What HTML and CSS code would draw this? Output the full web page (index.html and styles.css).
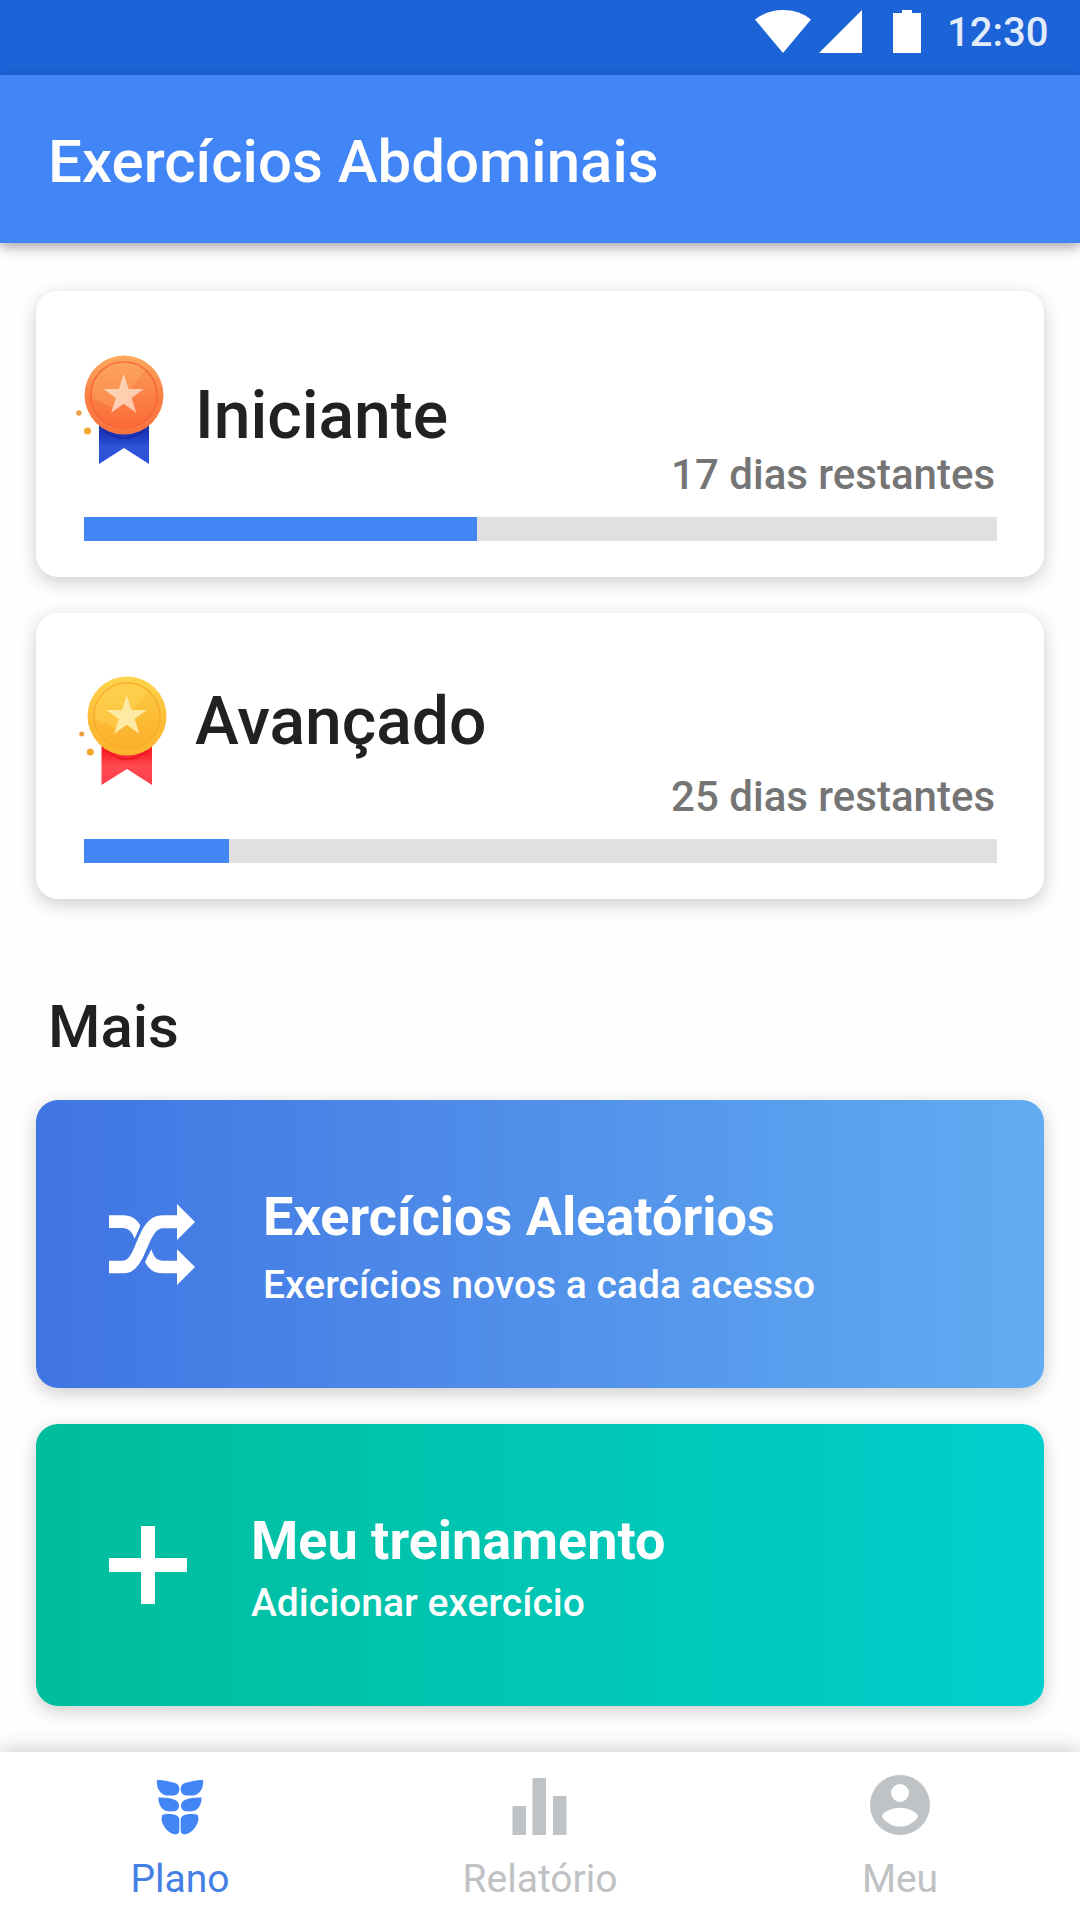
FILE: index.html
```html
<!DOCTYPE html>
<html lang="pt-BR">
<head>
<meta charset="utf-8">
<title>Exercícios Abdominais</title>
<link rel="stylesheet" href="styles.css">
</head>
<body>
<div class="screen">
  <div class="status-bar">
    <svg class="status-icons" viewBox="0 0 168 44" aria-hidden="true">
      <path d="M0 9.500C8 3 18 0 28 0s20 3 28 9.500L28 43z"/>
      <path d="M64 43h43V0z"/>
      <path d="M138 3h9V0h10v3h9v40h-28z"/>
    </svg>
    <span class="clock">12:30</span>
  </div>
  <header class="app-bar"><h1>Exercícios Abdominais</h1></header>

  <main class="content">
    <section class="card plan beginner">
      <div class="plan-head">
        <svg class="medal" viewBox="0 0 96 120" aria-hidden="true">
          <defs>
            <linearGradient id="bronze-rim" x1="0" y1="0" x2="0" y2="1"><stop offset="0" stop-color="#fcaa5c"/><stop offset=".55" stop-color="#fa7c45"/><stop offset="1" stop-color="#f9743f"/></linearGradient>
            <linearGradient id="bronze" x1="0" y1="0" x2="0" y2="1"><stop offset="0" stop-color="#fa9a55"/><stop offset="1" stop-color="#fb6a38"/></linearGradient>
            <linearGradient id="blue-ribbon" x1="0" y1="0" x2="0" y2="1"><stop offset=".35" stop-color="#1a35b8"/><stop offset=".65" stop-color="#2f55d8"/><stop offset="1" stop-color="#2c50d4"/></linearGradient>
            <linearGradient id="bronze-star" x1="0" y1="0" x2="1" y2="1"><stop offset="0" stop-color="#ffd9bd"/><stop offset="1" stop-color="#fec4a6"/></linearGradient>
          </defs>
          <path fill="url(#blue-ribbon)" d="M23 66h50v47L48 97l-25 16z"/>
          <path fill="#1420a0" opacity=".55" d="M27 77q21 18 42 0v2q-21 19-42 0z"/>
          <circle cx="48" cy="44" r="39.500" fill="url(#bronze-rim)"/>
          <circle cx="48" cy="44" r="33" fill="url(#bronze)" stroke="#f8673a" stroke-width="1.600"/>
          <path fill="#ffbf70" opacity=".28" d="M69 19A32.200 32.200 0 0 0 16 47L40 58z"/>
          <path fill="url(#bronze-star)" d="M47.700 23l4.800 15h15.200l-12 9 4.500 14.800-12.500-9-12.500 9L39.800 47l-12.300-9H43z"/>
          <circle cx="2.900" cy="62" r="2.700" fill="#eda04c"/>
          <circle cx="11.500" cy="80" r="3.500" fill="#f3a630"/>
        </svg>
        <h2>Iniciante</h2>
      </div>
      <p class="days">17 dias restantes</p>
      <div class="progress"><div class="progress-fill" style="width:43.05%"></div></div>
    </section>

    <section class="card plan advanced">
      <div class="plan-head">
        <svg class="medal" viewBox="0 0 96 120" aria-hidden="true">
          <defs>
            <linearGradient id="gold-rim" x1="0" y1="0" x2="0" y2="1"><stop offset="0" stop-color="#fdd54c"/><stop offset=".6" stop-color="#fcbb34"/><stop offset="1" stop-color="#fbb52d"/></linearGradient>
            <linearGradient id="gold" x1="0" y1="0" x2="0" y2="1"><stop offset="0" stop-color="#fdcb42"/><stop offset="1" stop-color="#fcae2b"/></linearGradient>
            <linearGradient id="red-ribbon" x1="0" y1="0" x2="0" y2="1"><stop offset=".3" stop-color="#f72027"/><stop offset=".6" stop-color="#ff4950"/><stop offset="1" stop-color="#ff3e4c"/></linearGradient>
          </defs>
          <path fill="url(#red-ribbon)" d="M22.500 66h50.500v47L48 97l-25.500 16z"/>
          <path fill="#e80c18" opacity=".6" d="M27 77q21 18 42 0v2q-21 19-42 0z"/>
          <circle cx="48" cy="44" r="39.500" fill="url(#gold-rim)"/>
          <circle cx="48" cy="44" r="33" fill="url(#gold)" stroke="#f9aa2d" stroke-width="1.400"/>
          <path fill="#ffe268" opacity=".3" d="M69 19A32.200 32.200 0 0 0 16 47L40 58z"/>
          <path fill="#ffeaa4" d="M47.700 23l4.800 15h15.200l-12 9 4.500 14.800-12.500-9-12.500 9L39.800 47l-12.300-9H43z"/>
          <circle cx="2.700" cy="62" r="2.500" fill="#eda040"/>
          <circle cx="11.300" cy="80" r="3.500" fill="#f3a630"/>
        </svg>
        <h2>Avançado</h2>
      </div>
      <p class="days">25 dias restantes</p>
      <div class="progress"><div class="progress-fill" style="width:15.9%"></div></div>
    </section>

    <h2 class="section-title">Mais</h2>

    <section class="card action random">
      <svg class="action-icon" viewBox="268 372 258 243" aria-hidden="true">
        <path d="M268 406h42c25 0 42 12 52 31l-17 39c-9-21-17-32-37-32h-40z"/>
        <path d="M268 542h40c17 0 26-17 37-42 20-45 35-94 85-94h42v-34l54 54-54 54v-35h-42c-20 0-30 20-45 53-16 37-33 82-73 82h-44z"/>
        <path d="M395 508c7 22 15 34 35 34h42v-34l54 53-54 54v-35h-42c-28 0-44-13-54-34z"/>
      </svg>
      <div class="action-text">
        <h3>Exercícios Aleatórios</h3>
        <p>Exercícios novos a cada acesso</p>
      </div>
    </section>

    <section class="card action custom">
      <svg class="action-icon" viewBox="0 0 78 78" aria-hidden="true"><path d="M32 0h14v32h32v14H46v32H32V46H0V32h32z"/></svg>
      <div class="action-text">
        <h3>Meu treinamento</h3>
        <p>Adicionar exercício</p>
      </div>
    </section>
  </main>

  <nav class="bottom-nav">
    <a class="tab active">
      <svg viewBox="130 142 216 216" aria-hidden="true">
        <path id="abs-left" d="M169 174c22 1 39 5 54 10 9 3 13 9 13 18s-5 18-14 19c-11 1-23 1-32-2-15-5-24-27-21-45zM173 228c17-1 36 1 50 7 8 4 12 9 12 17 0 9-6 16-16 17-11 1-22 0-29-4-11-7-17-23-17-37zM185 280c9-4 28-4 38-1 10 3 13 8 13 18v29c0 9-5 13-14 12-23-3-47-38-37-58z"/>
        <use href="#abs-left" transform="matrix(-1 0 0 1 476 0)"/>
      </svg>
      <span>Plano</span>
    </a>
    <a class="tab">
      <svg viewBox="0 0 72 72" aria-hidden="true"><path d="M8.500 37h13.500v29H8.500zM28.500 9h13.500v57H28.500zM49 27h13.500v39H49z"/></svg>
      <span>Relatório</span>
    </a>
    <a class="tab">
      <svg viewBox="0 0 24 24" aria-hidden="true"><path d="M12 2a10 10 0 1 0 0 20 10 10 0 0 0 0-20zm0 3a3 3 0 1 1 0 6 3 3 0 0 1 0-6zm0 14.200c-2.500 0-4.710-1.280-6-3.220.03-1.990 4-3.080 6-3.080 1.990 0 5.970 1.090 6 3.080-1.290 1.940-3.500 3.220-6 3.220z"/></svg>
      <span>Meu</span>
    </a>
  </nav>
</div>
</body>
</html>
```
FILE: styles.css
```css
* { box-sizing: border-box; margin: 0; padding: 0; }

body {
  background: #fff;
  color: #212121;
  font-family: Roboto, "Liberation Sans", sans-serif;
}

h1, h2, h3 { font-weight: 500; }

.screen {
  display: flex;
  flex-direction: column;
  width: 1080px;
  height: 1920px;
  overflow: hidden;
  background: #fefefe;
}

.status-bar {
  display: flex;
  justify-content: flex-end;
  align-items: flex-start;
  flex: none;
  height: 75px;
  padding: 10px 33px 0 0;
  background: #1c63d8;
}
.status-icons { width: 168px; height: 44px; margin-right: 24px; fill: #fff; }
.clock {
  width: 100px;
  font-size: 40px;
  line-height: 46px;
  font-weight: 500;
  color: rgba(255, 255, 255, .88);
}

.app-bar {
  flex: none;
  height: 168px;
  padding: 5px 48px 0;
  background: #4285f6;
  box-shadow: 0 4px 12px rgba(0, 0, 0, .36);
  color: #fff;
}
.app-bar h1 { font-size: 60px; line-height: 163px; font-weight: 500; white-space: nowrap; }

.content {
  display: flex;
  flex-direction: column;
  flex: none;
  height: 1509px;
  padding: 48px 36px 0;
}

.card {
  flex: none;
  border-radius: 22px;
  box-shadow: 0 5px 18px rgba(0, 0, 0, .2);
}

.plan { height: 286px; padding: 0 47px 0 48px; background: #fff; }
.advanced { margin-top: 36px; }
.plan-head { display: grid; grid-template-columns: 111px 1fr; height: 159px; }
.plan-head h2 { padding-top: 92px; font-size: 66px; line-height: 66px; }
.advanced h2 { padding-top: 76px; }
.medal { width: 96px; height: 120px; margin: 60px 0 0 -8px; }
.advanced .medal { margin: 59px 0 0 -5px; }
.days {
  padding-right: 2px;
  font-size: 42px;
  line-height: 50px;
  font-weight: 500;
  color: #757575;
  text-align: right;
}
.progress { height: 24px; margin-top: 17px; background: #e0e0e0; }
.progress-fill { height: 100%; background: #4285f4; }

.section-title { height: 201px; padding: 98px 0 0 12px; font-size: 60px; line-height: 60px; }

.action { display: flex; color: #fff; fill: #fff; padding-left: 73px; }
.random { height: 288px; background: linear-gradient(90deg, #4074e3, #62acf1); }
.custom { height: 282px; margin-top: 36px; background: linear-gradient(90deg, #00bd9b, #00cfcd); }
.action-icon { flex: none; width: 86px; height: 81px; margin: 104px 68px 0 0; }
.custom .action-icon { width: 78px; height: 78px; margin: 102px 64px 0 0; }
.action-text { padding-top: 87px; white-space: nowrap; }
.action h3 { font-size: 54px; line-height: 60px; font-weight: 700; }
.action p { margin-top: 14px; font-size: 39px; line-height: 48px; font-weight: 500; }
.custom p { margin-top: 8px; }

.bottom-nav {
  display: grid;
  grid-template-columns: repeat(3, 1fr);
  flex: none;
  height: 168px;
  background: #fff;
  box-shadow: 0 -2px 20px rgba(0, 0, 0, .2);
}
.tab {
  display: flex;
  flex-direction: column;
  align-items: center;
  padding-top: 17px;
  color: #bfc1c3;
  fill: #bfc3c6;
}
.tab.active { color: #4480e4; fill: #4285f4; }
.tab svg { width: 72px; height: 72px; }
.tab span { margin-top: 14px; font-size: 39px; line-height: 48px; }
```
